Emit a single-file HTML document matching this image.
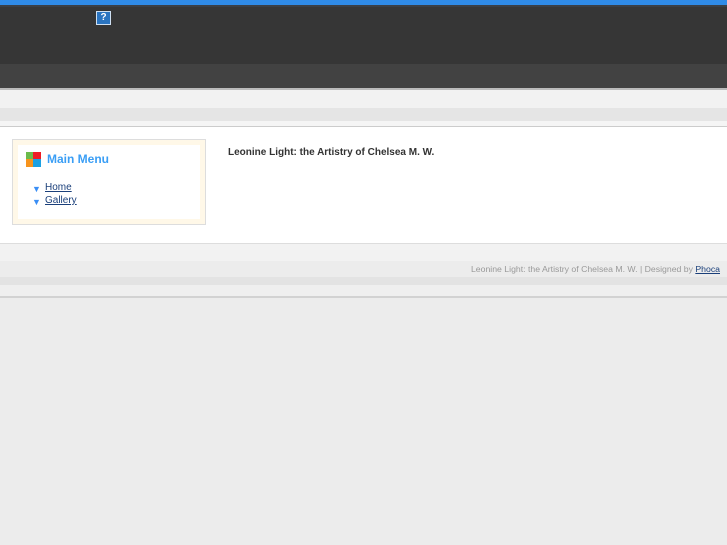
<!DOCTYPE html>
<html><head><meta charset="utf-8"><style>
*{margin:0;padding:0;box-sizing:border-box}
body{width:727px;height:545px;background:#ececec;font-family:"Liberation Sans",sans-serif;position:relative;overflow:hidden}
.a{position:absolute;left:0;width:727px}
</style></head><body>
<div class="a" style="top:0;height:5px;background:#2f8be8"></div>
<div class="a" style="top:5px;height:2px;background:#3a3f46"></div>
<div class="a" style="top:7px;height:57px;background:#363636"></div>
<div class="a" style="top:64px;height:24px;background:#424242"></div>
<div class="a" style="top:88px;height:2px;background:#bbb"></div>
<div class="a" style="top:90px;height:18px;background:#f2f2f2"></div>
<div class="a" style="top:108px;height:13px;background:#e5e5e5"></div>
<div class="a" style="top:121px;height:5px;background:#f5f5f5"></div>
<div class="a" style="top:126px;height:1px;background:#ccc"></div>
<div class="a" style="top:127px;height:116px;background:#fff"></div>
<div class="a" style="top:243px;height:1px;background:#ddd"></div>
<div class="a" style="top:244px;height:17px;background:#f2f2f2"></div>
<div class="a" style="top:261px;height:16px;background:#ececec"></div>
<div class="a" style="top:277px;height:8px;background:#e3e3e3"></div>
<div class="a" style="top:285px;height:11px;background:#efefef"></div>
<div class="a" style="top:296px;height:2px;background:#d2d2d2"></div>
<div style="position:absolute;left:96px;top:11px;width:15px;height:14px;background:#cfe0f2;padding:1px">
<div style="width:13px;height:12px;background:#2a74c0;color:#fff;font-size:10px;font-weight:bold;text-align:center;line-height:12px">?</div></div>
<div style="position:absolute;left:12px;top:139px;width:194px;height:86px;border:1px solid #ddd;background:#fff8e8;padding:5px">
<div style="background:#fff;width:182px;height:74px;position:relative">
<div style="position:absolute;left:8px;top:7px;width:7px;height:7px;background:#6bbb4b"></div>
<div style="position:absolute;left:15px;top:7px;width:8px;height:7px;background:#ee1c24"></div>
<div style="position:absolute;left:8px;top:14px;width:7px;height:8px;background:#f7941d"></div>
<div style="position:absolute;left:15px;top:14px;width:8px;height:8px;background:#1ba1e2"></div>
<div style="position:absolute;left:29px;top:7px;font-size:12px;font-weight:bold;color:#3a9ef5">Main Menu</div>
<div style="position:absolute;left:14px;top:39px;font-size:9px;color:#3a8ef5">▼</div>
<div style="position:absolute;left:14px;top:52px;font-size:9px;color:#3a8ef5">▼</div>
<div style="position:absolute;left:27px;top:36px;font-size:10px;color:#1a3f7a;text-decoration:underline;line-height:13px">Home<br>Gallery</div>
</div></div>
<div style="position:absolute;left:228px;top:147px;font-size:10px;font-weight:bold;color:#333">Leonine Light: the Artistry of Chelsea M. W.</div>
<div style="position:absolute;right:7px;top:264px;font-size:8.7px;color:#999">Leonine Light: the Artistry of Chelsea M. W. | Designed by <span style="color:#1a3f7a;text-decoration:underline">Phoca</span></div>
</body></html>
